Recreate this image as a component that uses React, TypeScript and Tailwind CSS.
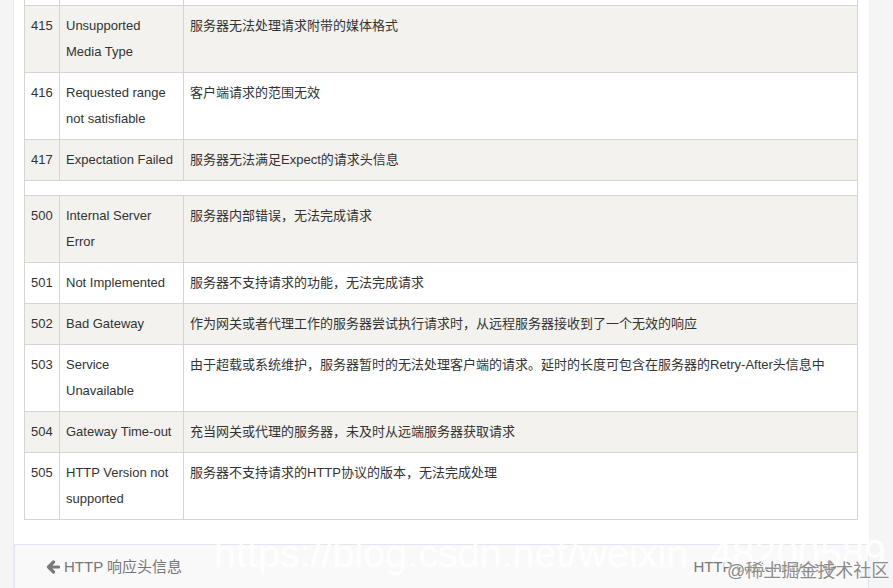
import { Fragment } from 'react'

// 状态码表格数据
const rows4xx = [
  { code: '415', name: 'Unsupported Media Type', desc: '服务器无法处理请求附带的媒体格式' },
  { code: '416', name: 'Requested range not satisfiable', desc: '客户端请求的范围无效' },
  { code: '417', name: 'Expectation Failed', desc: '服务器无法满足Expect的请求头信息' },
]

const rows5xx = [
  { code: '500', name: 'Internal Server Error', desc: '服务器内部错误，无法完成请求' },
  { code: '501', name: 'Not Implemented', desc: '服务器不支持请求的功能，无法完成请求' },
  { code: '502', name: 'Bad Gateway', desc: '作为网关或者代理工作的服务器尝试执行请求时，从远程服务器接收到了一个无效的响应' },
  { code: '503', name: 'Service Unavailable', desc: '由于超载或系统维护，服务器暂时的无法处理客户端的请求。延时的长度可包含在服务器的Retry-After头信息中' },
  { code: '504', name: 'Gateway Time-out', desc: '充当网关或代理的服务器，未及时从远端服务器获取请求' },
  { code: '505', name: 'HTTP Version not supported', desc: '服务器不支持请求的HTTP协议的版本，无法完成处理' },
]

const cell = 'border border-[#d5d5d5] px-[6px] pt-[7px] pb-[7px] align-top'

function Row({ code, name, desc, striped }: { code: string; name: string; desc: string; striped: boolean }) {
  return (
    <tr className={striped ? 'bg-[#f3f2ee]' : 'bg-white'}>
      <td className={cell}>{code}</td>
      <td className={cell}>{name}</td>
      <td className={cell}>{desc}</td>
    </tr>
  )
}

function ArrowLeft() {
  return (
    <svg width="14" height="14" viewBox="0 0 14 14" className="shrink-0">
      <path d="M12.5 7H3 M7.5 2 L2.5 7 L7.5 12" fill="none" stroke="#7a7a7a" strokeWidth="3.2" strokeLinecap="round" strokeLinejoin="round" />
    </svg>
  )
}

function ArrowRight() {
  return (
    <svg width="14" height="14" viewBox="0 0 14 14" className="shrink-0">
      <path d="M1.5 7H11 M6.5 2 L11.5 7 L6.5 12" fill="none" stroke="#7a7a7a" strokeWidth="3.2" strokeLinecap="round" strokeLinejoin="round" />
    </svg>
  )
}

export default function App() {
  return (
    <div
      className="relative w-[893px] h-[588px] overflow-hidden bg-[#f5f5f5] flex"
      style={{ fontFamily: '"Liberation Sans", "Noto Sans CJK SC", sans-serif' }}
    >
      {/* 左侧灰边 */}
      <div className="w-[14px] shrink-0 border-r border-[#ececec]" />

      {/* 正文 */}
      <div className="w-[855px] shrink-0 bg-white flex flex-col">
        <div className="pl-[10px] pr-[11px]">
          <table className="w-[834px] table-fixed border-collapse text-[13px] leading-[26px] text-[#333]">
            <colgroup>
              <col className="w-[35px]" />
              <col className="w-[124px]" />
              <col />
            </colgroup>
            <tbody>
              <tr className="bg-white">
                <td className="border-x border-b border-[#d5d5d5] p-0"><div className="h-[5px]" /></td>
                <td className="border-x border-b border-[#d5d5d5] p-0" />
                <td className="border-x border-b border-[#d5d5d5] p-0" />
              </tr>
              {rows4xx.map((r, i) => (
                <Row key={r.code} {...r} striped={i % 2 === 0} />
              ))}
              <tr className="bg-white">
                <td colSpan={3} className="border border-[#d5d5d5] p-0"><div className="h-[14px]" /></td>
              </tr>
              {rows5xx.map((r, i) => (
                <Fragment key={r.code}>
                  <Row {...r} striped={i % 2 === 0} />
                </Fragment>
              ))}
            </tbody>
          </table>
        </div>

        {/* 上一篇 / 下一篇 */}
        <div className="mt-[24px] h-[70px] bg-[#f9f9f9] border-t border-x border-[#e3e6ee] px-[31px] pt-[12px] flex justify-between text-[15px] leading-[20px] text-[#777]">
          <div className="flex items-center gap-[4px] h-[20px]">
            <ArrowLeft />
            <span>HTTP 响应头信息</span>
          </div>
          <div className="flex items-center gap-[4px] h-[20px]">
            <span>HTTP content-type</span>
            <ArrowRight />
          </div>
        </div>
      </div>

      {/* 水印 */}
      <div className="absolute left-[214px] top-[528px] text-[39.5px] leading-[50px] text-white/90 whitespace-nowrap pointer-events-none">
        https://blog.csdn.net/weixin_48200589
      </div>
      <div
        className="absolute left-[727px] top-[558px] text-[18px] leading-[26px] text-[#8c8c8c] whitespace-nowrap pointer-events-none"
        style={{ textShadow: '0 0 2px #fff, 0 0 2px #fff' }}
      >
        @稀土掘金技术社区
      </div>
    </div>
  )
}
